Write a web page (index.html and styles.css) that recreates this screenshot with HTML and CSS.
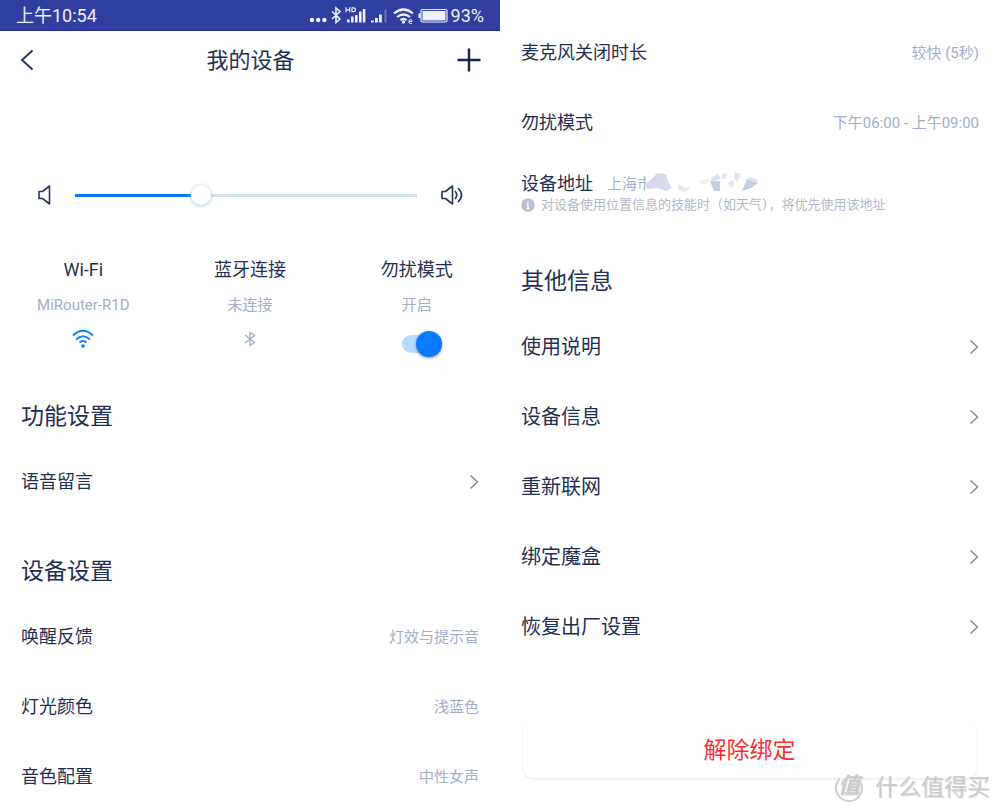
FILE: index.html
```html
<!DOCTYPE html>
<html lang="zh-CN">
<head>
<meta charset="utf-8">
<meta name="viewport" content="width=device-width, initial-scale=1">
<title>我的设备</title>
<link rel="stylesheet" href="styles.css">
</head>
<body>
<main class="screens">
  <section class="screen">
    <div class="status">
      <span class="status-time">上午10:54</span>
      <svg class="status-icons" width="142" height="30" viewBox="0 0 142 30" aria-hidden="true">
        <g fill="#eef0ff">
          <circle cx="3" cy="20" r="2.200"/><circle cx="9.200" cy="20" r="2.200"/><circle cx="15.400" cy="20" r="2.200"/>
          <path d="M38 22.500v-3h2.600v3zM42 22.500v-6h2.600v6zM46 22.500v-7.500h2.600v7.500zM50 22.500v-11h2.600v11zM53.800 22.500V9h2.600v13.500z"/>
          <path d="M62 22.500v-2h2.800v2zM66 22.500v-4.500h2.800v4.500zM70 22.500v-8h2.800v8z"/>
          <path d="M75.500 22.500V9.500h2v13z" opacity=".3"/>
        </g>
        <g fill="none" stroke="#eef0ff" stroke-width="1.600">
          <path d="M23 11.500l8 7.500-4 3.500V8l4 3.500-8 7.500"/>
          <path d="M37 7.300v5M40.700 7.300v5M37 9.800h3.700M43 7.900v3.800h1.500q2 0 2-1.900t-2-1.900z" stroke-width="1.200"/>
          <path d="M85 13.500q9.500-8 19 0M88 17q6.500-5 13 0M91.500 20.200q3-2.500 6 0" stroke-width="2.200"/>
          <path d="M100 21.500h3q0-2-1.500-2t-1.600 2 1.600 2h1.500" stroke-width="1"/>
          <rect x="112" y="9.500" width="26" height="12.500" rx="1.500" stroke-width="1.200"/>
        </g>
        <circle cx="94.500" cy="22" r="1.700" fill="#eef0ff"/>
        <path d="M113.500 11h23v9.500h-23zM109.500 13.500h2v4.500h-2z" fill="#eef0ff"/>
      </svg>
      <span class="status-battery">93%</span>
    </div>
    <header class="topbar">
      <button class="icon-button" type="button" aria-label="返回">
        <svg width="14" height="22" viewBox="0 0 14 22"><path d="M12.500 1.500L2 11l10.500 9.500" fill="none" stroke="#1c2f56" stroke-width="1.800"/></svg>
      </button>
      <h1 class="title">我的设备</h1>
      <button class="icon-button" type="button" aria-label="添加">
        <svg width="24" height="24" viewBox="0 0 24 24"><path d="M12 .5v23M.5 12h23" stroke="#132448" stroke-width="2.400"/></svg>
      </button>
    </header>
    <div class="volume">
      <svg width="13" height="20" viewBox="0 0 13 20" fill="none" stroke="#24365d" stroke-width="1.600" stroke-linejoin="round"><path d="M1 6.500h3.500L11.500 1v18l-7-5.500H1z"/></svg>
      <input class="slider" type="range" min="0" max="100" value="36" aria-label="音量">
      <svg width="22" height="20" viewBox="0 0 22 20" fill="none" stroke="#24365d" stroke-width="1.600" stroke-linejoin="round"><path d="M1 6.500h3.500L11.500 1v18l-7-5.500H1zM14 6q3.500 4 0 8M17 3q7 7 0 14"/></svg>
    </div>
    <div class="tiles">
      <div class="tile">
        <span class="tile-name">Wi-Fi</span>
        <span class="tile-state">MiRouter-R1D</span>
        <span class="tile-control"><svg width="22" height="20" viewBox="0 0 22 20" fill="none" stroke="#0a7cff" stroke-width="1.800"><path d="M1 6.500q10-9.500 20 0M4 10.500q7-6.500 14 0M7.500 13.500q3.500-3 7 0"/><circle cx="11" cy="17" r="1.800" fill="#0a7cff" stroke="none"/></svg></span>
      </div>
      <div class="tile">
        <span class="tile-name">蓝牙连接</span>
        <span class="tile-state">未连接</span>
        <span class="tile-control"><svg width="12" height="16" viewBox="0 0 12 16" fill="none" stroke="#a3aecb" stroke-width="1.300"><path d="M1 4l9.500 7.500L6 14.500V1.500l4.500 3L1 12"/></svg></span>
      </div>
      <div class="tile">
        <label class="tile-name" for="dnd">勿扰模式</label>
        <span class="tile-state">开启</span>
        <span class="tile-control"><input class="switch" id="dnd" type="checkbox" role="switch" checked></span>
      </div>
    </div>
    <h2 class="heading">功能设置</h2>
    <a class="row" href="#voice">语音留言<svg class="chevron" width="10" height="16" viewBox="0 0 10 16"><path d="M1.500 1.500L8.500 8l-7 6.500"/></svg></a>
    <h2 class="heading heading-next">设备设置</h2>
    <div class="row">唤醒反馈<span class="value">灯效与提示音</span></div>
    <div class="row">灯光颜色<span class="value">浅蓝色</span></div>
    <div class="row">音色配置<span class="value">中性女声</span></div>
  </section>

  <section class="screen screen-more">
    <div class="row">麦克风关闭时长<span class="value">较快 (5秒)</span></div>
    <div class="row">勿扰模式<span class="value">下午06:00 - 上午09:00</span></div>
    <div class="address">
      <div class="address-line">
        <span>设备地址</span>
        <span class="address-value">上海市<svg class="mosaic" width="118" height="22" viewBox="0 0 118 22" aria-hidden="true">
          <path d="M2 0h116v22H2z" fill="#fff"/>
          <path d="M0 14l9-7 4-5 9 1 2 7 4 7-6 3-8-3-10 1z" fill="#d6daea"/>
          <path d="M34 13l7 4 6-1-5 5-7-1z" fill="#e4e7f2"/>
          <path d="M54 11l10-4 3 4-9 3z" fill="#eff1f8"/>
          <path d="M66 10l10 0 0 10-6 0z" fill="#c6cee3"/>
          <path d="M67 7l7-4 3 5-10 3z" fill="#dde1ee"/>
          <path d="M78 3l5-1-1 6-5-1zM91 1l6 2-4 8-3-4zM84 12l5-3 2 6-5 2z" fill="#e4e7f3"/>
          <path d="M98 20l5-12 11 4-7 5z" fill="#c6cee3"/>
          <path d="M103 6l10 2 1 4-8-2z" fill="#dfe3f0"/>
        </svg></span>
      </div>
      <p class="note"><svg width="14" height="14" viewBox="0 0 14 14" aria-hidden="true"><circle cx="7" cy="7" r="6.800" fill="#b9c0d0"/><path d="M7 3v1.800M5.500 6.200H7V11M5.500 10.500h3" stroke="#fff" stroke-width="1.300" fill="none"/></svg>对设备使用位置信息的技能时（如天气），将优先使用该地址</p>
    </div>
    <h2 class="heading heading-other">其他信息</h2>
    <nav class="links">
      <a class="row" href="#manual">使用说明<svg class="chevron" width="10" height="16" viewBox="0 0 10 16"><path d="M1.500 1.500L8.500 8l-7 6.500"/></svg></a>
      <a class="row" href="#info">设备信息<svg class="chevron" width="10" height="16" viewBox="0 0 10 16"><path d="M1.500 1.500L8.500 8l-7 6.500"/></svg></a>
      <a class="row" href="#network">重新联网<svg class="chevron" width="10" height="16" viewBox="0 0 10 16"><path d="M1.500 1.500L8.500 8l-7 6.500"/></svg></a>
      <a class="row" href="#box">绑定魔盒<svg class="chevron" width="10" height="16" viewBox="0 0 10 16"><path d="M1.500 1.500L8.500 8l-7 6.500"/></svg></a>
      <a class="row" href="#reset">恢复出厂设置<svg class="chevron" width="10" height="16" viewBox="0 0 10 16"><path d="M1.500 1.500L8.500 8l-7 6.500"/></svg></a>
    </nav>
    <button class="unbind" type="button">解除绑定</button>
    <div class="watermark"><span class="watermark-logo">值</span><span>什么值得买</span></div>
  </section>
</main>
</body>
</html>
```
FILE: styles.css
```css
* {
  box-sizing: border-box;
}

body {
  margin: 0;
  background: #fff;
  color: #1f2f54;
  font-family: Roboto, "Noto Sans CJK SC", sans-serif;
  font-size: 18px;
  line-height: 24px;
}

svg {
  display: block;
  flex: none;
}

.screens {
  display: grid;
  grid-template-columns: 1fr 1fr;
}

.screen {
  position: relative;
  min-width: 0;
}

.screen-more {
  padding-top: 18px;
}

.status {
  display: flex;
  align-items: center;
  height: 31px;
  padding: 0 16px;
  background: #303f9f;
  border-bottom: 1px solid #1c2590;
  color: #eef0ff;
}

.status-time,
.status-battery {
  padding-top: 2px;
}

.status-time {
  flex: 1;
}

.topbar {
  display: flex;
  align-items: center;
  justify-content: space-between;
  height: 57px;
  padding: 0 19px 0 20px;
}

.icon-button {
  display: flex;
  width: 24px;
  padding: 0;
  border: 0;
  background: none;
}

.title {
  margin: 0;
  padding-top: 2px;
  font-size: 22px;
  font-weight: 400;
}

.volume {
  display: flex;
  align-items: center;
  gap: 24px;
  margin-top: 94px;
  padding: 0 37px 0 38px;
}

.slider {
  flex: 1;
  min-width: 0;
  height: 26px;
  margin: 0;
  appearance: none;
  background: linear-gradient(90deg, #087cff 37%, #d4ddec 37%) center / 100% 3px no-repeat;
}

.slider::-webkit-slider-thumb {
  appearance: none;
  width: 20px;
  height: 20px;
  border-radius: 50%;
  background: #fff;
  box-shadow: 0 1px 4px #a9c3e6;
}

.tiles {
  display: grid;
  grid-template-columns: repeat(3, 1fr);
  margin: 50px 0 26px;
}

.tile {
  display: flex;
  flex-direction: column;
  align-items: center;
}

.tile-state {
  margin-top: 11px;
  color: #a3aecb;
  font-size: 15px;
}

.tile-control {
  display: flex;
  align-items: center;
  height: 44px;
}

.switch {
  position: relative;
  width: 40px;
  height: 18px;
  margin: 10px 0 0 10px;
  appearance: none;
  border-radius: 9px;
  background: #b6dbff;
}

.switch::before {
  content: "";
  position: absolute;
  top: -4px;
  right: 0;
  width: 26px;
  height: 26px;
  border-radius: 50%;
  background: #087cff;
  box-shadow: 0 1px 3px #8c8c9c;
}

.heading {
  margin: 0;
  padding: 0 21px;
  font-size: 23px;
  font-weight: 400;
  line-height: 60px;
}

.heading-next {
  margin-top: 25px;
}

.heading-other {
  margin-top: 26px;
}

.row {
  display: flex;
  align-items: center;
  justify-content: space-between;
  height: 70px;
  padding: 0 21px;
  color: inherit;
  text-decoration: none;
}

.links {
  font-size: 20px;
}

.value {
  color: #a3aecb;
  font-size: 15px;
}

.chevron {
  fill: none;
  stroke: #858c9b;
  stroke-width: 1.5;
}

.address {
  padding: 14px 21px 12px;
}

.address-line {
  display: flex;
  gap: 14px;
}

.address-value {
  position: relative;
  color: #a3b0d4;
  font-size: 15px;
}

.mosaic {
  position: absolute;
  top: -1px;
  left: 37px;
}

.note {
  display: flex;
  align-items: center;
  gap: 6px;
  margin: 0;
  color: #b4bac8;
  font-size: 13px;
  line-height: 18px;
}

.unbind {
  display: block;
  width: calc(100% - 47px);
  height: 58px;
  margin: 58px 24px 0 23px;
  padding: 3px 0 0;
  border: 0;
  border-radius: 10px;
  background: #fff;
  box-shadow: 0 1px 3px #e6e6e9;
  color: #f5302f;
  font: inherit;
  font-size: 23px;
}

.watermark {
  position: absolute;
  right: 10px;
  bottom: 8px;
  display: flex;
  align-items: center;
  gap: 12px;
  color: #cbcbcd;
  font-size: 23px;
  line-height: 32px;
  text-shadow: 1px 1px 0 #e2e2e2;
}

.watermark-logo {
  width: 28px;
  height: 28px;
  border: 2px solid #cfcfd1;
  border-top-color: transparent;
  border-radius: 50%;
  font-size: 22px;
  font-style: italic;
  font-weight: 700;
  line-height: 20px;
  text-align: center;
}
```
